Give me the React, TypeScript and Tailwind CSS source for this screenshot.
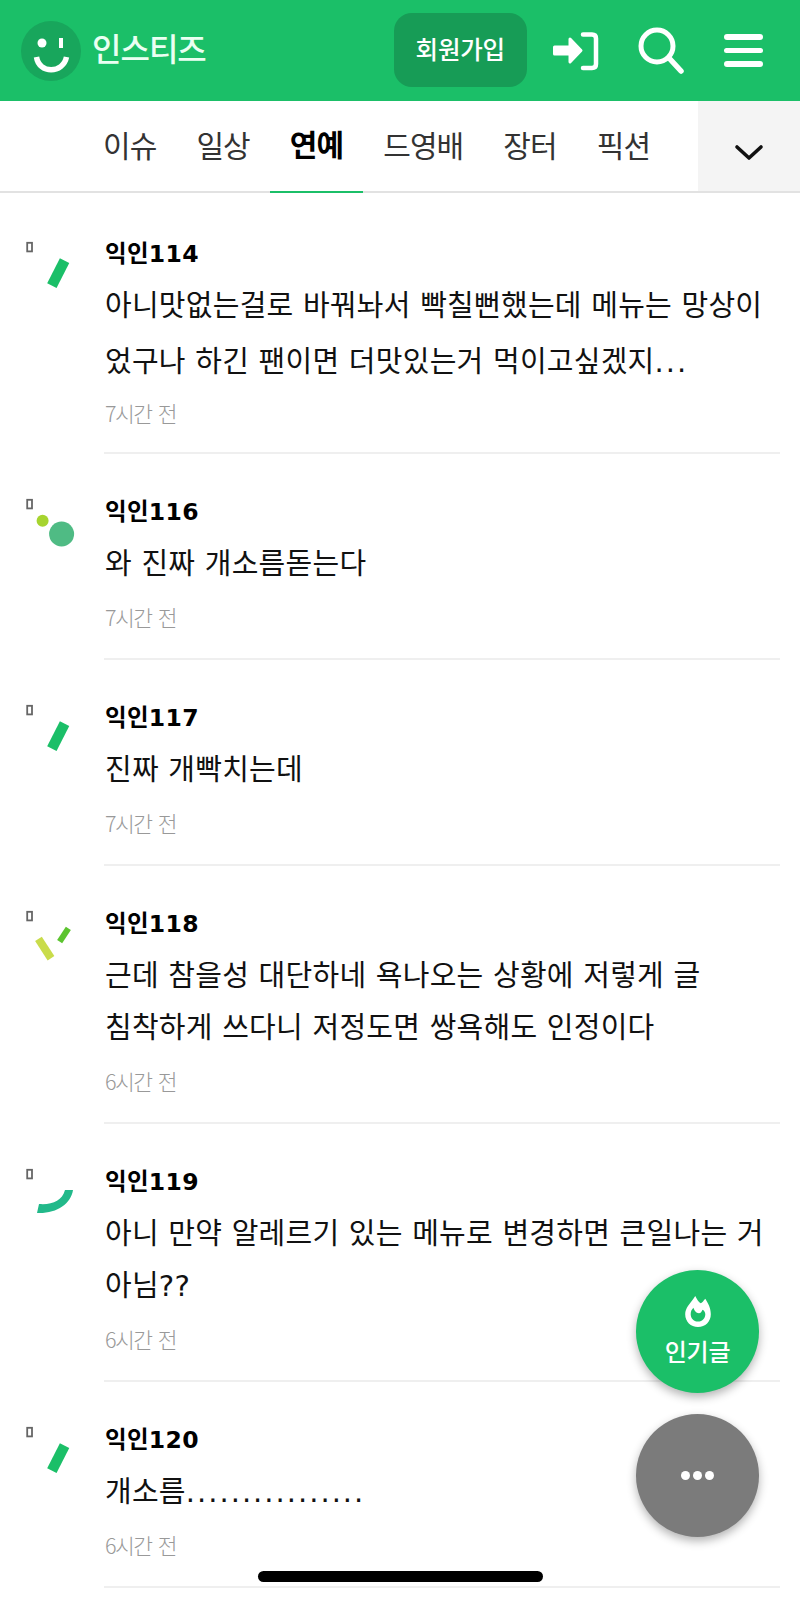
const KR = "font-['DejaVu_Sans','Noto_Sans_CJK_KR',sans-serif]";

const tabs = ["이슈", "일상", "연예", "드영배", "장터", "픽션"];

type Comment = {
  name: string;
  lines: string[];
  time: string;
  mark: "bar" | "dots" | "ticks" | "arc";
  wide?: boolean;
};

const comments: Comment[] = [
  {
    name: "익인114",
    lines: ["아니맛없는걸로 바꿔놔서 빡칠뻔했는데 메뉴는 망상이", "었구나 하긴 팬이면 더맛있는거 먹이고싶겠지..."],
    time: "7시간 전",
    mark: "bar",
    wide: true,
  },
  { name: "익인116", lines: ["와 진짜 개소름돋는다"], time: "7시간 전", mark: "dots" },
  { name: "익인117", lines: ["진짜 개빡치는데"], time: "7시간 전", mark: "bar" },
  {
    name: "익인118",
    lines: ["근데 참을성 대단하네 욕나오는 상황에 저렇게 글", "침착하게 쓰다니 저정도면 쌍욕해도 인정이다"],
    time: "6시간 전",
    mark: "ticks",
  },
  {
    name: "익인119",
    lines: ["아니 만약 알레르기 있는 메뉴로 변경하면 큰일나는 거", "아님??"],
    time: "6시간 전",
    mark: "arc",
  },
  { name: "익인120", lines: ["개소름................"], time: "6시간 전", mark: "bar" },
];

function Avatar({ mark }: { mark: Comment["mark"] }) {
  return (
    <svg width="60" height="60" viewBox="0 0 60 60" className="ml-6 shrink-0" aria-hidden="true">
      <rect x="3.2" y="1.8" width="4.8" height="8.6" fill="#fff" stroke="#666" strokeWidth="1.8" />
      {mark === "bar" && <rect x="29" y="18" width="10.5" height="28" fill="#1bbf68" transform="rotate(27 34 32)" />}
      {mark === "dots" && (
        <>
          <circle cx="18.6" cy="22.7" r="6" fill="#a6d42f" />
          <circle cx="37.6" cy="36" r="12.5" fill="#4fbb84" />
        </>
      )}
      {mark === "ticks" && (
        <>
          <rect x="17" y="27" width="8" height="23" fill="#c9dc4b" transform="rotate(-33 21 39)" />
          <rect x="37" y="17" width="6" height="16" fill="#5cc42f" transform="rotate(33 40 25)" />
        </>
      )}
      {mark === "arc" && <path d="M41 22 H49 C47 36 32 46 13 45 L15 36 C28 37 38 33 41 22 Z" fill="#22b98a" />}
    </svg>
  );
}

// the dots in the reference sit wider than the hangul around them
function Line({ text }: { text: string }) {
  const parts = text.split(/(\.+)/);
  return (
    <div>
      {parts.map((part, i) =>
        part.startsWith(".") ? (
          <span key={i} className="tracking-[2px]">
            {part}
          </span>
        ) : (
          <span key={i}>{part}</span>
        ),
      )}
    </div>
  );
}

function Row({ item }: { item: Comment }) {
  return (
    <div className={`flex ${item.wide ? "pt-12" : "pt-11"}`}>
      <Avatar mark={item.mark} />
      <div className={`ml-5 mr-5 flex-1 border-b-2 border-[#efefef] pl-px ${item.wide ? "pb-6" : "pb-[26px]"}`}>
        <div className={`${KR} text-[23.5px] leading-[24px] font-bold tracking-[0.3px] text-black ${item.wide ? "mt-px" : "mt-[2px]"}`}>
          {item.name}
        </div>
        <div
          className={`text-[29px] tracking-[0.25px] whitespace-nowrap text-[#111] ${KR} ${
            item.wide ? "mt-[12px] leading-[56px]" : "mt-[14px] leading-[52px]"
          }`}
        >
          {item.lines.map((line) => (
            <Line key={line} text={line} />
          ))}
        </div>
        <div
          className={`font-['Noto_Sans_CJK_KR',sans-serif] text-[21.5px] leading-[30px] font-light tracking-[-1.5px] text-[#999] [word-spacing:3px] ${
            item.wide ? "mt-[8px]" : "mt-[12px]"
          }`}
        >
          {item.time}
        </div>
      </div>
    </div>
  );
}

export default function App() {
  return (
    <div className="relative h-[1598px] w-[800px] overflow-hidden bg-white font-['Noto_Sans_CJK_KR',sans-serif]">
      <header className="flex h-[101px] items-center bg-[#1bbf68] pl-[21px]">
        <svg width="60" height="60" viewBox="0 0 60 60" aria-hidden="true">
          <circle cx="30" cy="30" r="30" fill="#18a65c" />
          <circle cx="21" cy="22" r="4.5" fill="#fff" />
          <rect x="38" y="17" width="4" height="10" fill="#fff" />
          <path d="M15.5 36 C18 53 42 53 45.5 36" fill="none" stroke="#fff" strokeWidth="5.5" />
        </svg>
        <span className="ml-[11px] -mt-2 text-[32px] leading-none font-medium tracking-[-1px] whitespace-nowrap text-[#eafff2]">
          인스티즈
        </span>
        <button className="-mt-0.5 ml-[188px] h-[74px] w-[133px] rounded-[18px] bg-[#179c56] text-[24.5px] font-medium tracking-[-0.2px] text-white">
          회원가입
        </button>
        <svg width="50" height="40" viewBox="0 0 50 40" className="ml-[23px] shrink-0" aria-hidden="true">
          <path d="M4.5 16 H20 V8 L31 19.5 L20 31 V23 H4.5 Z" fill="#fff" stroke="#fff" strokeWidth="3" strokeLinejoin="round" />
          <path d="M33 3.5 H42 Q46 3.5 46 7.5 V33 Q46 37 42 37 H33" fill="none" stroke="#fff" strokeWidth="4.5" strokeLinecap="round" />
        </svg>
        <svg width="48" height="48" viewBox="0 0 48 48" className="ml-[38px] shrink-0" aria-hidden="true">
          <circle cx="19" cy="19" r="16" fill="none" stroke="#fff" strokeWidth="5" />
          <path d="M31 31 L43 44" stroke="#fff" strokeWidth="5.5" strokeLinecap="round" />
        </svg>
        <div className="ml-[38px] flex w-[39px] shrink-0 flex-col gap-[8px]">
          <div className="h-[5.5px] rounded-full bg-white" />
          <div className="h-[5.5px] rounded-full bg-white" />
          <div className="h-[5.5px] rounded-full bg-white" />
        </div>
      </header>

      <nav className="flex h-[92px] border-b-2 border-[#e2e2e2] pl-[83px]">
        {tabs.map((tab) => (
          <div
            key={tab}
            className={`flex h-[92px] items-center px-5 pb-1.5 text-[30px] tracking-[-0.9px] whitespace-nowrap ${
              tab === "연예" ? "border-b-2 border-[#1bbf68] font-bold text-black" : "text-[#333]"
            }`}
          >
            {tab}
          </div>
        ))}
        <div className="ml-auto flex h-[90px] w-[102px] items-center justify-center bg-[#f4f4f4]">
          <svg width="30" height="18" viewBox="0 0 30 18" className="mt-[14px]" aria-hidden="true">
            <path d="M3 3 L15 14 L27 3" fill="none" stroke="#111" strokeWidth="3.6" strokeLinecap="round" strokeLinejoin="round" />
          </svg>
        </div>
      </nav>

      <div className="flex flex-col">
        {comments.map((item) => (
          <Row key={item.name} item={item} />
        ))}
      </div>

      <div className="absolute left-[636px] top-[1270px] flex h-[123px] w-[123px] flex-col items-center justify-center rounded-full bg-[#1bbf68] pb-[2px] shadow-[0_4px_10px_rgba(0,0,0,0.3)]">
        <svg width="26" height="32" viewBox="0 0 28 35" aria-hidden="true">
          <path d="M14 35 C6 35 0 29 0 21 C0 14 5 10 11 1 C13 5 15 8 17 9 C19 8 20 6 22 4 C25 9 28 14 28 21 C28 29 22 35 14 35 Z" fill="#fff" />
          <path d="M14 29 C9 29 6 25 6 21 C6 18 7 16 9 14 C10 17 12 20 15 20 C17 20 18 18 19 16 C21 17 22 19 22 21 C22 25 19 29 14 29 Z" fill="#1bbf68" />
        </svg>
        <span className="mt-2 text-[24px] leading-[32px] font-medium tracking-[-0.3px] text-white">인기글</span>
      </div>
      <div className="absolute left-[636px] top-[1414px] flex h-[123px] w-[123px] items-center justify-center gap-[3px] rounded-full bg-[#7b7b7b] shadow-[0_4px_10px_rgba(0,0,0,0.3)]">
        <div className="h-[9px] w-[9px] rounded-full bg-white" />
        <div className="h-[9px] w-[9px] rounded-full bg-white" />
        <div className="h-[9px] w-[9px] rounded-full bg-white" />
      </div>
      <div className="absolute left-[258px] top-[1571px] h-[11px] w-[285px] rounded-full bg-black" />
    </div>
  );
}
